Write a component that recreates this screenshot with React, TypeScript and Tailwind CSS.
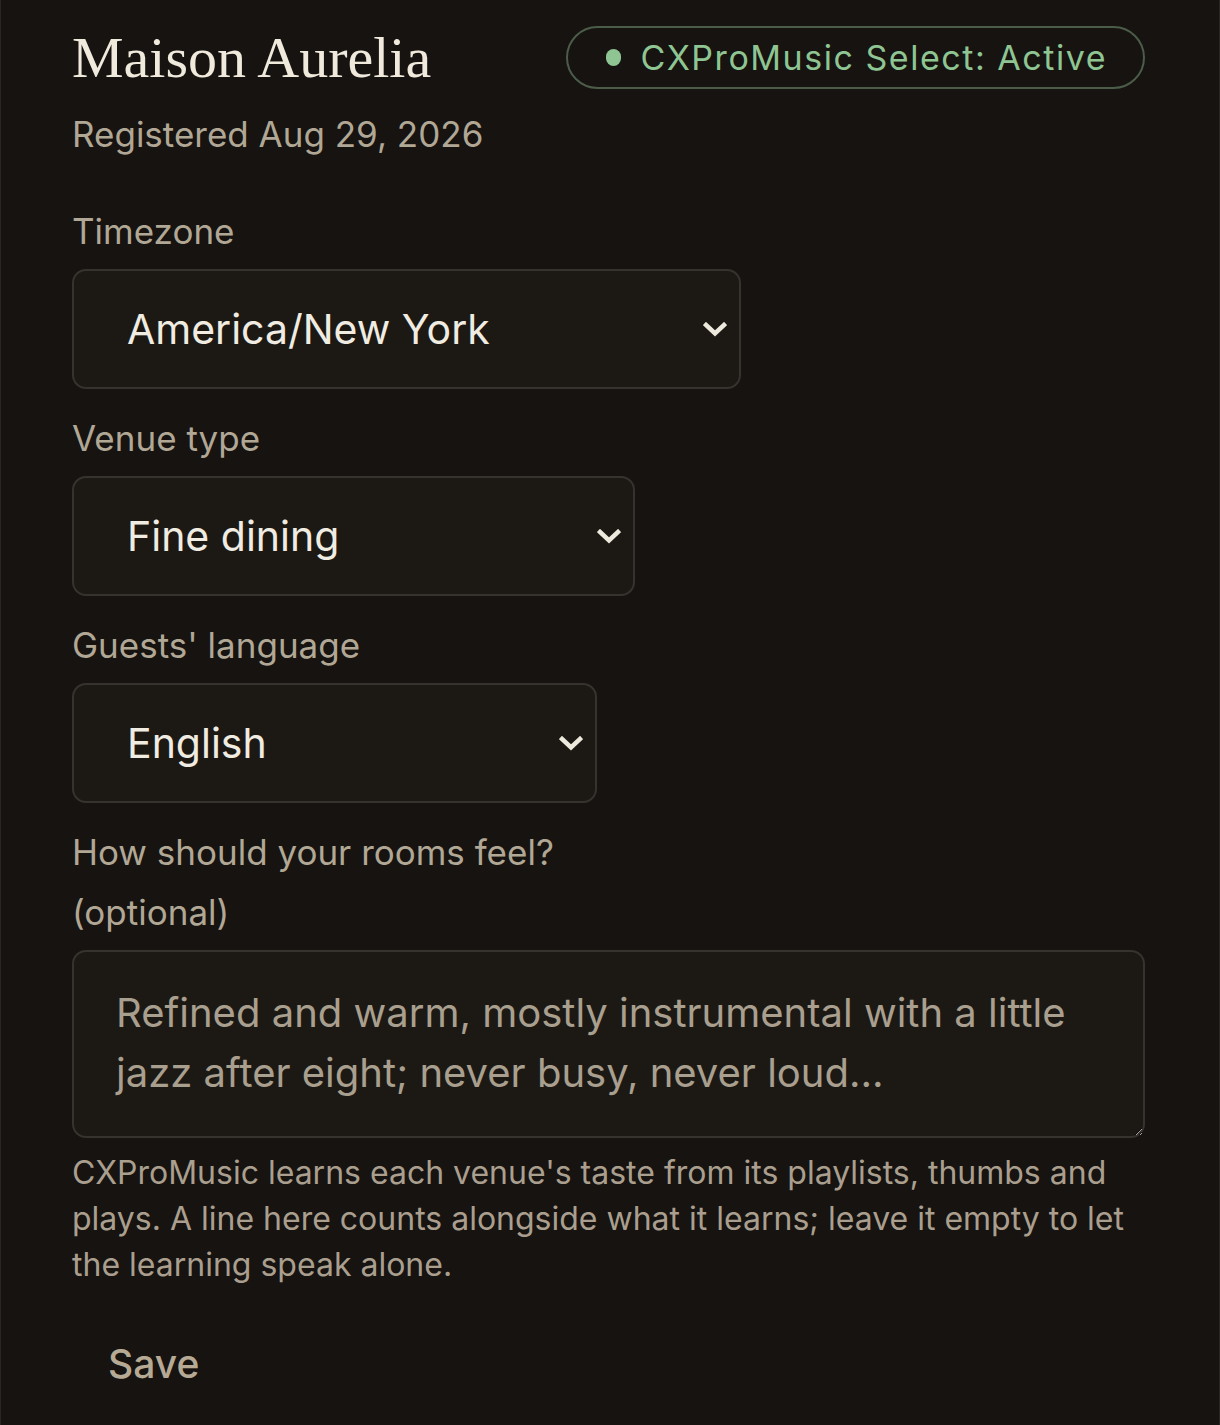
import React from "react";

const sans = "font-['Inter','Noto_Sans',sans-serif]";

function Chevron() {
  return (
    <svg width="24" height="15" viewBox="0 0 24 15" className="shrink-0">
      <polyline
        points="3,3 12,11.5 21,3"
        fill="none"
        stroke="#eee9dd"
        strokeWidth="4.5"
        strokeLinecap="square"
      />
    </svg>
  );
}

function SelectBox({ value, width }: { value: string; width: string }) {
  return (
    <button
      type="button"
      className={`${width} h-[120px] flex items-center justify-between pl-[53px] pr-[12px] rounded-[14px] border-2 border-[#36322e] bg-[#1c1915] text-[41px] leading-none text-[#f1ece1]`}
    >
      <span>{value}</span>
      <Chevron />
    </button>
  );
}

function Field({ label, children }: { label: React.ReactNode; children: React.ReactNode }) {
  return (
    <div className="flex flex-col mt-[19px] first:mt-0">
      <label className="text-[35px] leading-[60px] text-[#b1a795]">{label}</label>
      <div className="mt-2">{children}</div>
    </div>
  );
}

export default function App() {
  return (
    <div className={`${sans} min-h-screen bg-[#161311] border-x border-[#2a2623] pl-[71px] pr-[74px] pt-[26px] pb-10`}>
      <div className="flex items-center justify-between">
        <h1 className="font-['Liberation_Serif',serif] text-[58px] leading-none text-[#f0eadd]">
          Maison Aurelia
        </h1>
        <div className="h-[63px] flex items-center gap-[19px] pl-[38px] pr-[36px] rounded-full border-2 border-[#4b5c49] text-[34px] leading-none tracking-[0.045em] text-[#8fc592]">
          <span className="w-[15px] h-[17px] rounded-full bg-[#8fc592]" />
          <span>CXProMusic Select: Active</span>
        </div>
      </div>

      <p className="mt-5 text-[35px] leading-[51px] text-[#b1a795]">Registered Aug 29, 2026</p>

      <div className="mt-[41px] flex flex-col">
        <Field label="Timezone">
          <SelectBox value="America/New York" width="w-[669px]" />
        </Field>
        <Field label="Venue type">
          <SelectBox value="Fine dining" width="w-[563px]" />
        </Field>
        <Field label="Guests' language">
          <SelectBox value="English" width="w-[525px]" />
        </Field>
        <Field
          label={
            <>
              How should your rooms feel?
              <br />
              (optional)
            </>
          }
        >
          <textarea
            rows={2}
            placeholder="Refined and warm, mostly instrumental with a little jazz after eight; never busy, never loud…"
            className="block w-full h-[188px] rounded-[14px] border-2 border-[#36322e] bg-[#1c1915] pl-[42px] pr-[24px] py-[31px] text-[40px] leading-[60px] text-[#ece6da] placeholder:text-[#a99f8e] outline-none"
          />
        </Field>
      </div>

      <p className="mt-3 text-[32px] leading-[46px] text-[#aa9f8e]">
        CXProMusic learns each venue's taste from its playlists, thumbs and plays. A line here counts alongside what it
        learns; leave it empty to let the learning speak alone.
      </p>

      <button type="button" className="mt-[46px] pl-[36px] text-[39px] leading-[60px] font-medium text-[#b6aa95]">
        Save
      </button>
    </div>
  );
}
